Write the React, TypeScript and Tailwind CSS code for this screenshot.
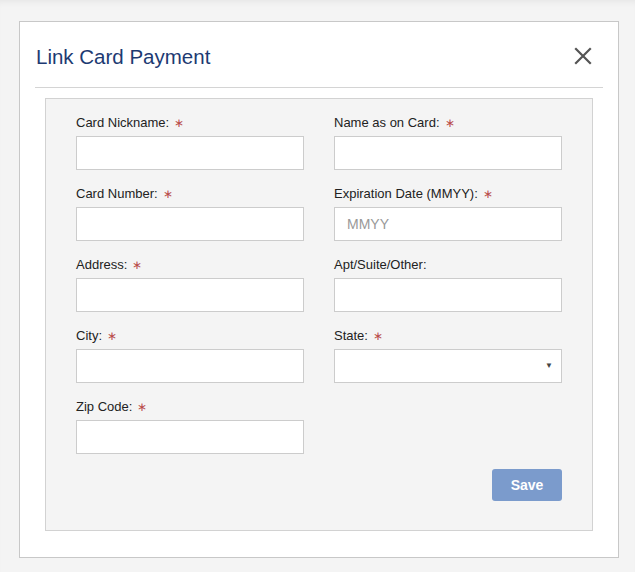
import React from 'react'

const font = { fontFamily: '"Liberation Sans", Arial, Helvetica, sans-serif' }

interface FieldProps {
  label: string
  required?: boolean
  placeholder?: string
  select?: boolean
}

function Field({ label, required, placeholder, select }: FieldProps) {
  return (
    <div className="flex flex-col">
      <label className="flex items-center h-[18px] text-[13px] leading-[18px] text-[#222]">
        {label}
        {required && <span className="ml-[5px] text-[12px] text-[#b94a48] leading-none">∗</span>}
      </label>
      {select ? (
        <div className="relative mt-[4px] h-[34px] bg-white border border-[#cccccc]">
          <span className="absolute right-[8px] top-[12px] text-[8px] leading-none text-[#444]">▼</span>
        </div>
      ) : (
        <input
          placeholder={placeholder}
          className="mt-[4px] h-[34px] w-full bg-white border border-[#cccccc] px-[12px] text-[14px] text-[#333] placeholder:text-[#999] outline-none"
          style={font}
        />
      )}
    </div>
  )
}

export default function App() {
  return (
    <div
      className="min-h-[572px] bg-[#f4f4f4] pt-[21px] pl-[19px] shadow-[inset_0_6px_6px_-4px_rgba(0,0,0,0.06)]"
      style={font}
    >
      <div className="w-[600px] h-[537px] bg-white border border-[#c8c8c8] px-[15px]">
        {/* Header */}
        <div className="flex items-center justify-between h-[66px] border-b border-[#d4d4d4] pl-[1px] pr-[11px]">
          <h1 className="text-[20.5px] font-medium text-[#1d3a72] pt-[5px]">Link Card Payment</h1>
          <button className="pt-[3px]" aria-label="Close">
            <svg width="18" height="18" viewBox="0 0 18 18">
              <path d="M2 2 L16 16 M16 2 L2 16" stroke="#555" strokeWidth="2.2" strokeLinecap="square" />
            </svg>
          </button>
        </div>

        {/* Form panel */}
        <div className="mt-[10px] ml-[10px] w-[548px] h-[433px] bg-[#f4f4f4] border border-[#d2d2d2] px-[30px] pt-[15px]">
          <div className="grid grid-cols-2 gap-x-[30px] gap-y-[15px]">
            <Field label="Card Nickname:" required />
            <Field label="Name as on Card:" required />
            <Field label="Card Number:" required />
            <Field label="Expiration Date (MMYY):" required placeholder="MMYY" />
            <Field label="Address:" required />
            <Field label="Apt/Suite/Other:" />
            <Field label="City:" required />
            <Field label="State:" required select />
            <Field label="Zip Code:" required />
          </div>
          <div className="flex justify-end mt-[15px]">
            <button className="w-[70px] h-[32px] rounded-[3px] bg-[#7b9bcc] text-white text-[14px] font-bold">
              Save
            </button>
          </div>
        </div>
      </div>
    </div>
  )
}
